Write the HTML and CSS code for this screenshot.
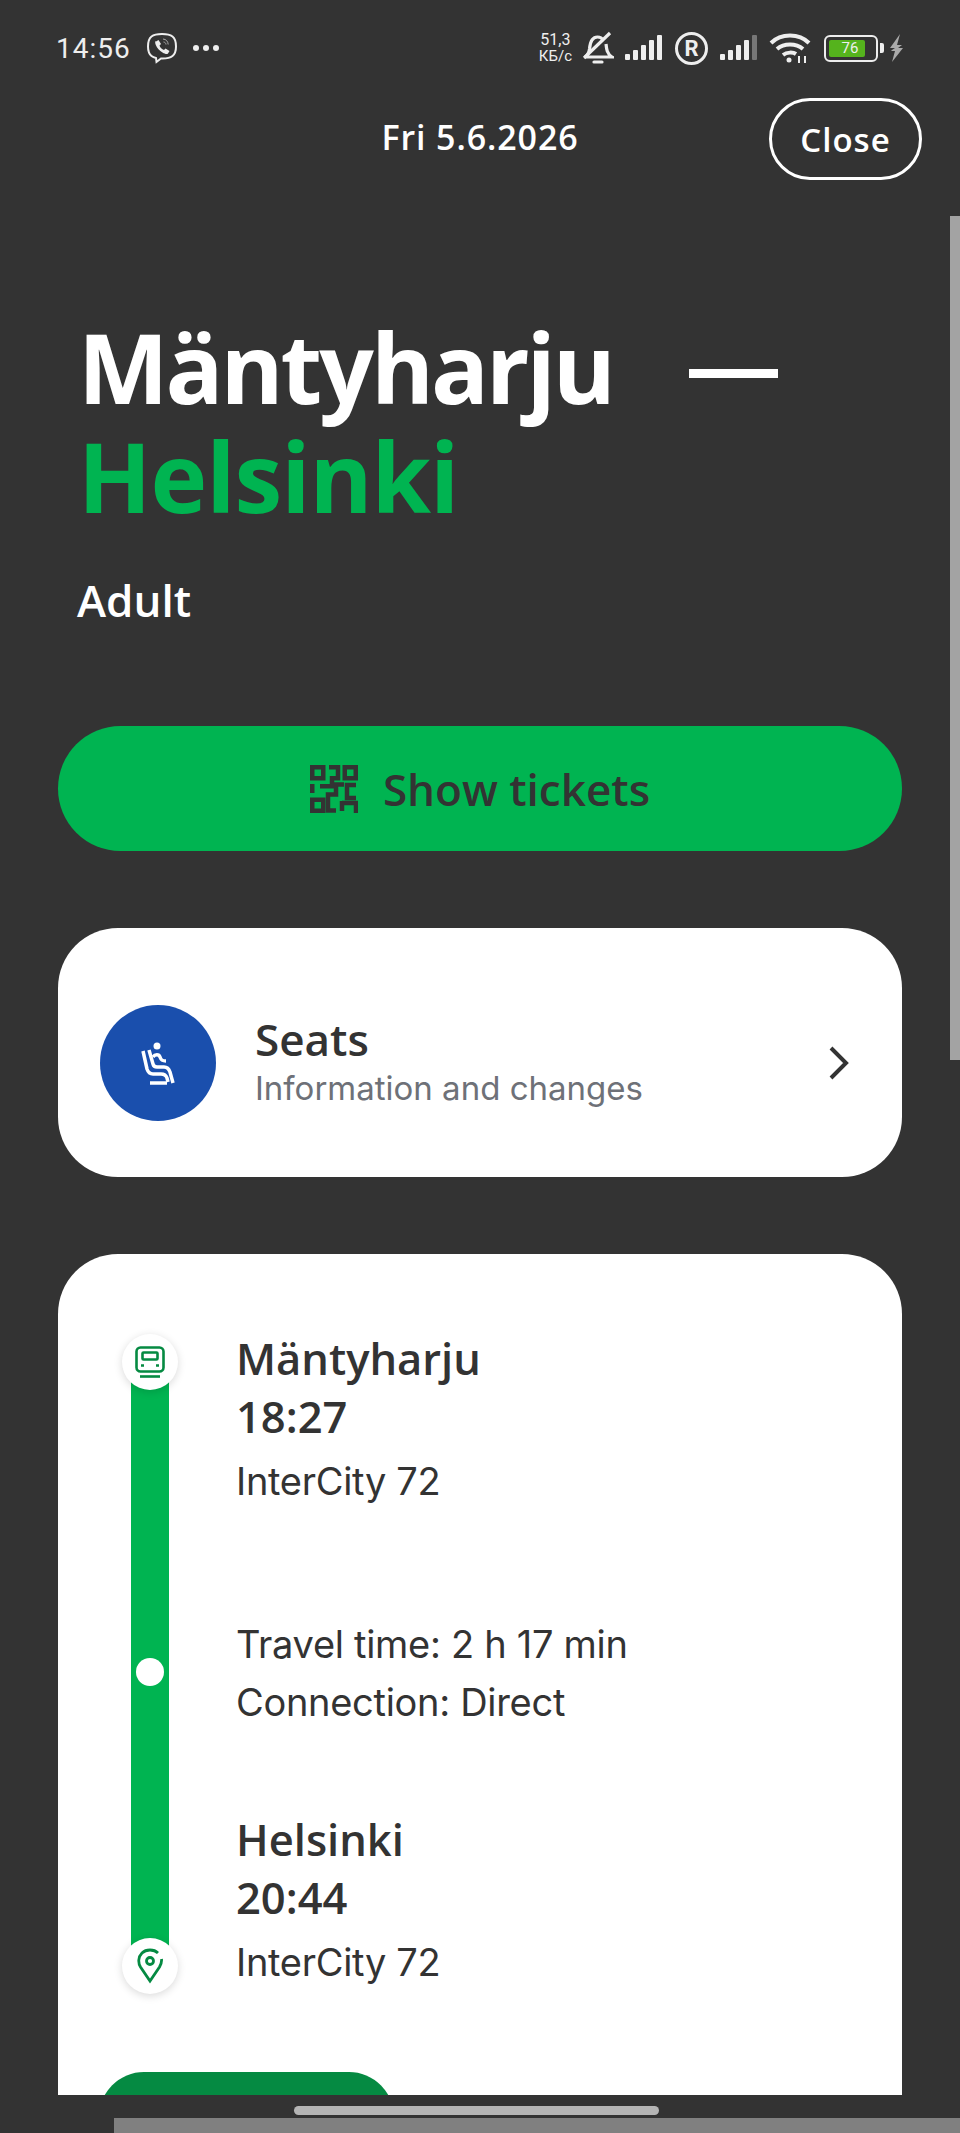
FILE: index.html
```html
<!DOCTYPE html>
<html lang="en">
<head>
    <meta charset="UTF-8">
    <meta name="viewport" content="width=device-width, initial-scale=1.0">
    <title>Ticket</title>
    <link rel="stylesheet" href="styles.css">
</head>
<body>
    <div class="screen">
        <!-- Status bar -->
        <div class="status-bar">
            <div class="status-left">
                <span class="clock">14:56</span>
                <svg class="viber" width="32" height="32" viewBox="0 0 32 32" fill="none" stroke="#eee" stroke-width="2">
                    <path d="M16 2c-4 0-8 .5-10.500 2.500C3 6.500 2 10 2 14.500s1 7.500 3.500 9.500c1.300 1 2.500 1.500 4.500 2l.5 4 4.500-3.500c5 .2 9-.5 11.500-2.500S30 19 30 14.500 29 6.500 26.500 4.500C24 2.500 20 2 16 2z"/>
                    <path d="M10 9.500l2.500-1.500 2.500 4-1.500 1.500c.5 2 2.500 4 4.500 4.500l1.500-1.500 4 2.500-1.500 2.500c-1 1-3 .5-5.500-1-3-1.800-5.500-4.500-6.700-7.500-.7-1.800-.8-3-.3-4z" fill="#eee" stroke="none"/>
                    <path d="M17 7c3 .2 5 2.300 5.200 5.500M17.500 10c1.500.2 2.300 1 2.500 2.500" stroke-width="1" stroke="#aaa"/>
                </svg>
                <span class="dots"><i></i><i></i><i></i></span>
            </div>
            <div class="status-right">
                <span class="speed">51,3<br><small>КБ/с</small></span>
                <svg class="bell" width="32" height="34" viewBox="0 0 32 34" fill="none" stroke="#eee" stroke-width="3.200">
                    <path d="M3 26c3-2 4-4 4.500-8 .5-6 2-12 8-12 2.500 0 4.500 1 5.500 3M24 13c.5 5 1 10 6 13H3"/>
                    <path d="M2 27L28 2"/>
                    <path d="M12 31h8" stroke-linecap="round"/>
                </svg>
                <svg class="signal" width="38" height="26" viewBox="0 0 38 26" fill="#eee">
                    <rect x="0" y="19" width="5" height="6" rx="1"/>
                    <rect x="8" y="15" width="5" height="10" rx="1"/>
                    <rect x="16" y="10" width="5" height="15" rx="1"/>
                    <rect x="24" y="5" width="5" height="20" rx="1"/>
                    <rect x="32" y="0" width="5" height="25" rx="1"/>
                </svg>
                <span class="reg">R</span>
                <svg class="signal" width="38" height="26" viewBox="0 0 38 26" fill="#eee">
                    <rect x="0" y="19" width="5" height="6" rx="1"/>
                    <rect x="8" y="15" width="5" height="10" rx="1"/>
                    <rect x="16" y="10" width="5" height="15" rx="1"/>
                    <rect x="24" y="5" width="5" height="20" rx="1"/>
                    <rect x="32" y="0" width="5" height="25" rx="1" fill="#777"/>
                </svg>
                <svg class="wifi" width="42" height="31" viewBox="0 0 42 31" fill="none" stroke="#eee" stroke-width="4">
                    <path d="M2 10C12 0 30 0 40 10"/>
                    <path d="M8 16c7-6 19-6 26 0"/>
                    <path d="M14 22c4-3 10-3 13-1"/>
                    <circle cx="20" cy="27" r="2.500" fill="#eee" stroke="none"/>
                    <path d="M30 30v-7M36 23v7" stroke-width="2"/>
                </svg>
                <span class="battery"><span class="battery-level">76</span></span>
                <svg class="bolt" width="15" height="28" viewBox="0 0 15 28" fill="#aaa">
                    <path d="M11 0L1 14h5l-3 2-1 1h4L3 28l11-14H9l4-3H8z"/>
                </svg>
            </div>
        </div>

        <!-- Date and close -->
        <div class="top-row">
            <span class="date">Fri 5.6.2026</span>
            <button class="close-btn">Close</button>
        </div>

        <div class="content">
            <h1 class="route">Mäntyharju<span class="dash"></span><br><span class="dest">Helsinki</span></h1>
            <p class="passenger">Adult</p>

            <button class="tickets-btn">
                <svg width="48" height="48" viewBox="0 0 48 48" fill="none" stroke="#333" stroke-width="4.500">
                    <rect x="2.250" y="2.250" width="11" height="11"/>
                    <rect x="34.750" y="2.250" width="11" height="11"/>
                    <rect x="2.250" y="34.750" width="11" height="11"/>
                    <path d="M19 2.250h9v11h-6v8H10M2.250 19v9M34 19.500h-8v10h-8v16h8M46 20h-9v13h9M32 36v10M32 38h14v10"/>
                </svg>
                Show tickets
            </button>

            <div class="card seats-card">
                <div class="seat-icon">
                    <svg width="34" height="44" viewBox="0 0 34 44" fill="none" stroke="#fff" stroke-width="3.500">
                        <circle cx="16" cy="5" r="3.500" fill="#fff" stroke="none"/>
                        <path d="M2 10l4 18c1 3 3 5 6 5h8c3 0 5 1 6 4l1 4"/>
                        <path d="M8 9l4 14c.5 2 2 3 4 3h7c3 0 5 2 6 5l3 11"/>
                        <path d="M9 42h17"/>
                        <path d="M12 16c2-3 6-3 7 0 1 3 2 4 6 4"/>
                    </svg>
                </div>
                <div class="seat-text">
                    <div class="seat-title">Seats</div>
                    <div class="seat-sub">Information and changes</div>
                </div>
                <svg class="chevron" width="22" height="34" viewBox="0 0 22 34" fill="none" stroke="#333" stroke-width="4">
                    <path d="M3 2l15 15L3 32"/>
                </svg>
            </div>

            <div class="card journey-card">
                <div class="timeline">
                    <div class="rail">
                        <div class="rail-stop">
                            <svg width="30" height="32" viewBox="0 0 30 32" fill="none" stroke="#058a42" stroke-width="2.600">
                                <rect x="1.500" y="1.500" width="27" height="24" rx="4"/>
                                <rect x="7.500" y="6.500" width="15" height="7" rx="1"/>
                                <path d="M6 19.500h3M21 19.500h3"/>
                                <path d="M5 30.500h20"/>
                            </svg>
                        </div>
                        <div class="rail-dot"></div>
                        <div class="rail-stop">
                            <svg width="26" height="36" viewBox="0 0 26 36" fill="none" stroke="#058a42" stroke-width="2.800">
                                <path d="M21 5C17 1 9 1 5 5c-4 4-4 10-1.500 14L13 33l9.500-14c1.500-2.500 2.300-5.500 2-8"/>
                                <circle cx="13" cy="13" r="3.500"/>
                            </svg>
                        </div>
                    </div>
                    <div class="legs">
                        <div class="leg">
                            <div class="stop-name">Mäntyharju</div>
                            <div class="stop-time">18:27</div>
                            <div class="leg-line train-line">InterCity 72</div>
                        </div>
                        <div class="leg leg-mid">
                            <div class="leg-line">Travel time: 2 h 17 min</div>
                            <div class="leg-line">Connection: Direct</div>
                        </div>
                        <div class="leg">
                            <div class="stop-name">Helsinki</div>
                            <div class="stop-time">20:44</div>
                            <div class="leg-line train-line">InterCity 72</div>
                        </div>
                    </div>
                </div>
                <div class="journey-action"></div>
            </div>
        </div>

        <!-- Overlays: scrollbars and gesture pill -->
        <div class="scroll-v"></div>
        <div class="scroll-h"></div>
        <div class="home-pill"></div>
    </div>
</body>
</html>
```

FILE: styles.css
```css
body {
    margin: 0;
    background-color: #333;
    font-family: "Open Sans", sans-serif;
}
.screen {
    position: relative;
    width: 960px;
    height: 2133px;
    overflow: hidden;
    background-color: #333;
    color: #fff;
}

/* Status bar */
.status-bar {
    display: flex;
    justify-content: space-between;
    align-items: center;
    height: 32px;
    padding: 32px 56px 0 56px;
}
.status-left, .status-right {
    display: flex;
    align-items: center;
}
.clock {
    font-family: "Roboto", sans-serif;
    font-size: 28px;
    letter-spacing: 1px;
    color: #eee;
}
.viber {
    margin-left: 15px;
}
.dots {
    display: flex;
    gap: 4px;
    margin-left: 15px;
}
.dots i {
    width: 6px;
    height: 6px;
    border-radius: 50%;
    background-color: #eee;
}
.speed {
    font-family: "Roboto", sans-serif;
    font-size: 16px;
    line-height: 16px;
    text-align: center;
    color: #eee;
}
.speed small {
    font-size: 15px;
}
.bell {
    margin-left: 10px;
}
.signal {
    margin-left: 11px;
}
.reg {
    display: flex;
    justify-content: center;
    align-items: center;
    width: 33px;
    height: 33px;
    box-sizing: border-box;
    margin-left: 12px;
    border: 3.5px solid #eee;
    border-radius: 50%;
    font-family: "Roboto", sans-serif;
    font-size: 22px;
    font-weight: 700;
    color: #eee;
}
.signal + .wifi {
    margin-left: 11px;
}
.reg + .signal {
    margin-left: 12px;
}
.battery {
    position: relative;
    display: block;
    width: 54px;
    height: 27px;
    box-sizing: border-box;
    margin: 0 6px 0 13px;
    padding: 3px;
    border: 2.500px solid #eee;
    border-radius: 6px;
}
.battery::after {
    content: "";
    position: absolute;
    top: 6px;
    right: -8px;
    width: 4px;
    height: 10px;
    border-radius: 0 2px 2px 0;
    background-color: #eee;
}
.battery-level {
    display: block;
    width: 36px;
    height: 100%;
    border-radius: 2px;
    background-color: #55b31d;
    font-family: "Roboto", sans-serif;
    font-size: 15px;
    line-height: 17px;
    text-align: center;
    text-indent: 6px;
    color: #eee;
}
.bolt {
    margin-left: 5px;
}

/* Date row */
.top-row {
    position: relative;
    display: flex;
    justify-content: center;
    align-items: center;
    height: 82px;
    margin-top: 34px;
}
.date {
    margin-top: -4px;
    font-size: 34px;
    font-weight: 600;
    letter-spacing: 0.9px;
}
.close-btn {
    position: absolute;
    top: 0;
    right: 38px;
    width: 153px;
    height: 82px;
    border: 3px solid #fff;
    border-radius: 41px;
    background: none;
    color: #fff;
    font-family: inherit;
    font-size: 33px;
    font-weight: 600;
    letter-spacing: 1px;
}

/* Main content */
.content {
    height: 1915px;
    overflow: hidden;
    padding: 0 58px;
}
.route {
    margin: 132px 0 0 20px;
    font-size: 96px;
    font-weight: 700;
    line-height: 109px;
    letter-spacing: -3px;
}
.dash {
    display: inline-block;
    width: 89px;
    height: 9px;
    margin-left: 76px;
    vertical-align: 26px;
    background-color: #fff;
}
.dest {
    letter-spacing: -1px;
    color: #00b451;
}
.passenger {
    margin: 45px 0 0 19px;
    font-size: 44px;
    font-weight: 600;
    line-height: 50px;
}
.tickets-btn {
    display: flex;
    justify-content: center;
    align-items: center;
    gap: 25px;
    width: 100%;
    height: 125px;
    margin-top: 101px;
    border: none;
    border-radius: 63px;
    background-color: #00b451;
    color: #333;
    font-family: inherit;
    font-size: 44px;
    font-weight: 600;
}
.card {
    border-radius: 60px;
    background-color: #fff;
    color: #333;
}
.seats-card {
    display: flex;
    align-items: center;
    height: 249px;
    box-sizing: border-box;
    margin-top: 77px;
    padding: 20px 52px 0 42px;
}
.seat-icon {
    display: flex;
    justify-content: center;
    align-items: center;
    width: 116px;
    height: 116px;
    border-radius: 50%;
    background-color: #1a4fad;
}
.seat-text {
    flex: 1;
    margin: 0 0 4px 39px;
}
.seat-title {
    font-size: 44px;
    font-weight: 600;
    line-height: 54px;
}
.seat-sub {
    font-family: "Inter", sans-serif;
    font-size: 33px;
    line-height: 44px;
    color: #6e7178;
}
.journey-card {
    height: 900px;
    margin-top: 77px;
    padding: 80px 0 0 64px;
}
.timeline {
    position: relative;
    display: flex;
}
.rail {
    position: relative;
    display: flex;
    flex-direction: column;
    justify-content: space-between;
    align-items: center;
    width: 56px;
    height: 660px;
}
.rail::before {
    content: "";
    position: absolute;
    top: 28px;
    bottom: 28px;
    left: 9px;
    width: 38px;
    background-color: #00b451;
}
.rail-stop {
    position: relative;
    display: flex;
    justify-content: center;
    align-items: center;
    width: 56px;
    height: 56px;
    border-radius: 50%;
    background-color: #fff;
    box-shadow: 0 2px 8px rgba(0,0,0,0.15);
}
.rail-dot {
    position: relative;
    width: 28px;
    height: 28px;
    margin-top: 16px;
    border-radius: 50%;
    background-color: #fff;
}
.legs {
    margin: -4px 0 0 58px;
}
.leg-mid {
    margin: 105px 0 80px;
}
.stop-name, .stop-time {
    font-size: 43.5px;
    font-weight: 600;
    line-height: 58px;
}
.leg-line {
    font-family: "Inter", sans-serif;
    font-size: 38px;
    line-height: 58px;
    letter-spacing: -0.3px;
    color: #333;
}
.train-line {
    margin-top: 6px;
}
.journey-action {
    width: 295px;
    height: 90px;
    margin: 78px 0 0 -23px;
    border-radius: 45px;
    background-color: #058a42;
}

/* Overlays */
.scroll-v {
    position: absolute;
    top: 216px;
    right: 0;
    width: 10px;
    height: 844px;
    background-color: #a3a3a3;
}
.scroll-h {
    position: absolute;
    bottom: 0;
    left: 114px;
    right: 0;
    height: 15px;
    background-color: #808080;
}
.home-pill {
    position: absolute;
    top: 2106px;
    left: 294px;
    width: 365px;
    height: 9px;
    border-radius: 5px;
    background-color: #b5b5b5;
}
```
